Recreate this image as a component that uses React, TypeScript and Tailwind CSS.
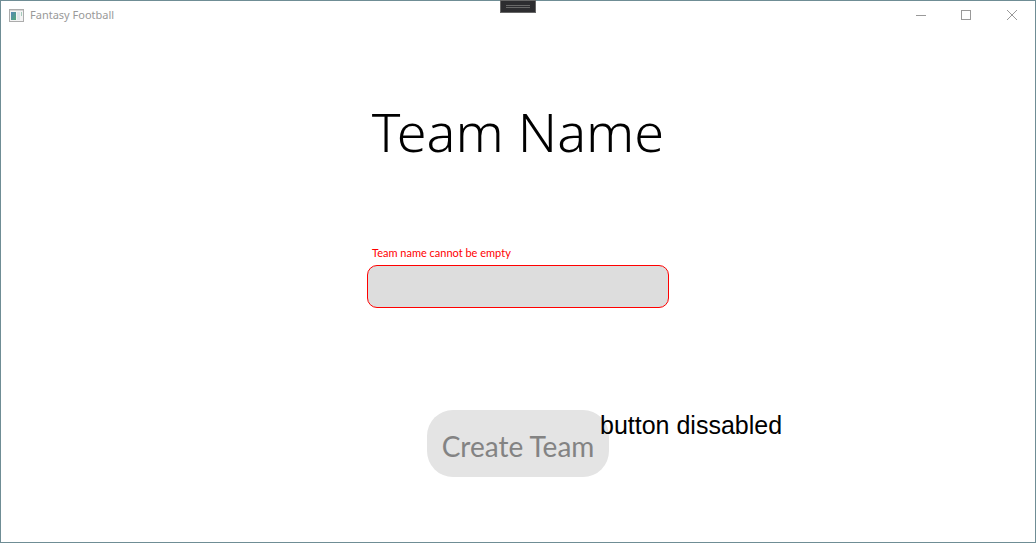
function AppIcon() {
  return (
    <svg className="h-[13px] w-[15px]" viewBox="0 0 15 13" shapeRendering="crispEdges" aria-hidden="true">
      <defs>
        <linearGradient id="pane" x1="0" y1="0" x2="1" y2="1">
          <stop offset="0" stopColor="#5487b8" />
          <stop offset="1" stopColor="#52a878" />
        </linearGradient>
      </defs>
      <rect width="15" height="13" fill="#acacac" />
      <rect x="1" y="1" width="13" height="1" fill="#d4d4d4" />
      <rect x="1" y="2" width="13" height="10" fill="#f4f4f4" />
      <rect x="2" y="3" width="5" height="8" fill="url(#pane)" />
      <rect x="8" y="3" width="3" height="8" fill="#dfe6ea" />
      <rect x="12" y="3" width="1" height="4" fill="#a5cbbb" />
    </svg>
  );
}

export default function App() {
  return (
    <div className="relative flex min-h-screen flex-col border border-[#6f8d95] bg-white font-['Open_Sans','Noto_Sans',sans-serif]">
      <header className="flex h-7 items-center justify-between text-[#999999]">
        <div className="flex items-center gap-[6px] pl-2">
          <AppIcon />
          <span className="font-['Noto_Sans',sans-serif] text-[11px] leading-4">Fantasy Football</span>
        </div>
        <div className="flex h-full pr-px">
          <button type="button" aria-label="Minimize" className="flex w-[45px] items-center justify-center">
            <svg width="10" height="10" viewBox="0 0 10 10" shapeRendering="crispEdges">
              <path d="M0 5.5H10" stroke="currentColor" />
            </svg>
          </button>
          <button type="button" aria-label="Maximize" className="flex w-[46px] items-center justify-center">
            <svg width="10" height="10" viewBox="0 0 10 10" shapeRendering="crispEdges">
              <path d="M.5 .5H9.5V9.5H.5Z" fill="none" stroke="currentColor" />
            </svg>
          </button>
          <button type="button" aria-label="Close" className="flex w-[45px] items-center justify-center">
            <svg width="10" height="10" viewBox="0 0 10 10">
              <path d="M0 0L10 10M10 0L0 10" stroke="currentColor" />
            </svg>
          </button>
        </div>
      </header>

      <div className="absolute inset-x-0 top-[-1px] flex justify-center">
        <div className="flex h-[13px] w-9 flex-col items-center justify-center gap-px border border-[#666666] bg-[#2d2d30]">
          <span className="h-px w-6 bg-[#686868]" />
          <span className="h-px w-6 bg-[#686868]" />
        </div>
      </div>

      <main className="flex flex-col items-center pt-16">
        <h1 className="font-['Noto_Sans',sans-serif] text-[54px] leading-[76px] font-light text-black">Team Name</h1>
        <div className="mt-[76px] flex w-[302px] flex-col">
          <label htmlFor="team-name" className="pl-[5px] font-['Lato',sans-serif] text-[11px] leading-4 text-[#ff0000]">
            Team name cannot be empty
          </label>
          <input
            id="team-name"
            type="text"
            className="mt-1 h-[43px] rounded-[10px] border border-[#ff0000] bg-[#dddddd] px-3 text-xl outline-none"
          />
        </div>
        <div className="relative mt-[102px]">
          <button
            type="button"
            disabled
            className="h-[67px] w-[182px] rounded-[26px] bg-[#e4e4e4] pt-1 font-['Lato',sans-serif] text-[28px] leading-9 text-[#838383]"
          >
            Create Team
          </button>
          <p className="absolute top-0 left-[173px] font-['Liberation_Sans',sans-serif] text-[25px] leading-[30px] whitespace-nowrap text-black">
            button dissabled
          </p>
        </div>
      </main>
    </div>
  );
}
